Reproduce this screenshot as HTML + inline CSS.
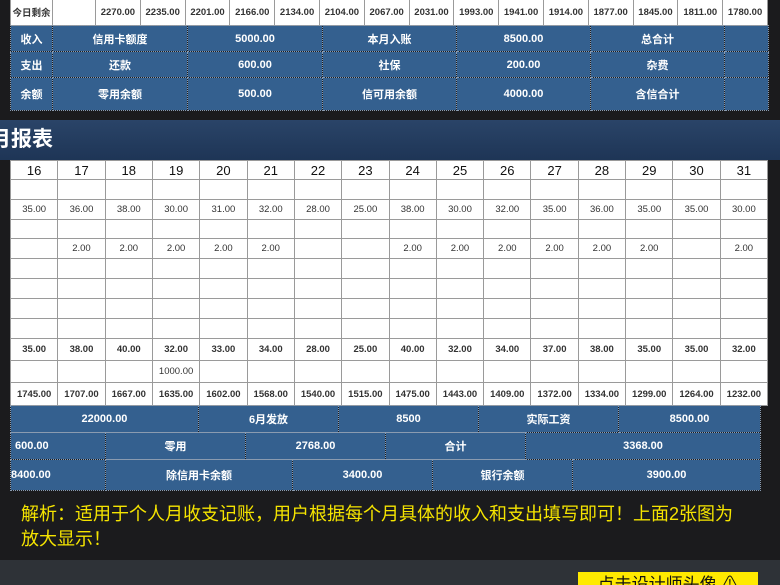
<!DOCTYPE html>
<html style="width:780px;height:585px;overflow:hidden"><head><meta charset="utf-8"><style>
*{margin:0;padding:0;box-sizing:border-box}
body{width:780px;height:585px;overflow:hidden;background:#1b1b1d;font-family:"Liberation Sans","Noto Sans CJK SC",sans-serif;position:relative}
table{border-collapse:collapse;position:absolute;table-layout:fixed}
td{text-align:center;overflow:hidden;white-space:nowrap}
.w td{background:#fff;border:1px solid #9a9a9a;font-size:9.5px;color:#333}
.r{color:#f00;font-weight:bold}
.b td{background:#34608f;border:1px dotted #8a9bb0;color:#fff;font-weight:bold;font-size:11px}
.h td{font-size:13px;color:#111}
</style></head><body>
<table class="w" style="left:10px;top:-2px;width:758px">
<colgroup><col style="width:42px"><col style="width:43px"><col span="15"></colgroup>
<tr style="height:27px"><td class="r">今日剩余</td><td></td>
<td class="r">2270.00</td><td class="r">2235.00</td><td class="r">2201.00</td><td class="r">2166.00</td><td class="r">2134.00</td><td class="r">2104.00</td><td class="r">2067.00</td><td class="r">2031.00</td><td class="r">1993.00</td><td class="r">1941.00</td><td class="r">1914.00</td><td class="r">1877.00</td><td class="r">1845.00</td><td class="r">1811.00</td><td class="r">1780.00</td></tr></table>
<table class="b" style="left:10px;top:25px;width:758px">
<colgroup><col style="width:42px"><col style="width:135px"><col style="width:135px"><col style="width:134px"><col style="width:134px"><col style="width:134px"><col style="width:44px"></colgroup>
<tr style="height:26px"><td>收入</td><td>信用卡额度</td><td>5000.00</td><td>本月入账</td><td>8500.00</td><td>总合计</td><td></td></tr>
<tr style="height:26px"><td>支出</td><td>还款</td><td>600.00</td><td>社保</td><td>200.00</td><td>杂费</td><td></td></tr>
<tr style="height:33px"><td>余额</td><td>零用余额</td><td>500.00</td><td>信可用余额</td><td>4000.00</td><td>含信合计</td><td></td></tr></table>
<div style="position:absolute;left:0;top:120px;width:780px;height:40px;background:linear-gradient(#2a4468,#1e3556);color:#fff;font-weight:bold;font-size:21px;line-height:40px;padding-left:0;text-indent:-10px">月报表</div>
<table class="w" style="left:10px;top:160px;width:758px">
<tr class="h" style="height:19px"><td>16</td><td>17</td><td>18</td><td>19</td><td>20</td><td>21</td><td>22</td><td>23</td><td>24</td><td>25</td><td>26</td><td>27</td><td>28</td><td>29</td><td>30</td><td>31</td></tr>
<tr style="height:20px"><td></td><td></td><td></td><td></td><td></td><td></td><td></td><td></td><td></td><td></td><td></td><td></td><td></td><td></td><td></td><td></td></tr>
<tr style="height:20px"><td>35.00</td><td>36.00</td><td>38.00</td><td>30.00</td><td>31.00</td><td>32.00</td><td>28.00</td><td>25.00</td><td>38.00</td><td>30.00</td><td>32.00</td><td>35.00</td><td>36.00</td><td>35.00</td><td>35.00</td><td>30.00</td></tr>
<tr style="height:19px"><td></td><td></td><td></td><td></td><td></td><td></td><td></td><td></td><td></td><td></td><td></td><td></td><td></td><td></td><td></td><td></td></tr>
<tr style="height:20px"><td></td><td>2.00</td><td>2.00</td><td>2.00</td><td>2.00</td><td>2.00</td><td></td><td></td><td>2.00</td><td>2.00</td><td>2.00</td><td>2.00</td><td>2.00</td><td>2.00</td><td></td><td>2.00</td></tr>
<tr style="height:20px"><td></td><td></td><td></td><td></td><td></td><td></td><td></td><td></td><td></td><td></td><td></td><td></td><td></td><td></td><td></td><td></td></tr>
<tr style="height:20px"><td></td><td></td><td></td><td></td><td></td><td></td><td></td><td></td><td></td><td></td><td></td><td></td><td></td><td></td><td></td><td></td></tr>
<tr style="height:20px"><td></td><td></td><td></td><td></td><td></td><td></td><td></td><td></td><td></td><td></td><td></td><td></td><td></td><td></td><td></td><td></td></tr>
<tr style="height:20px"><td></td><td></td><td></td><td></td><td></td><td></td><td></td><td></td><td></td><td></td><td></td><td></td><td></td><td></td><td></td><td></td></tr>
<tr style="height:22px"><td class="r">35.00</td><td class="r">38.00</td><td class="r">40.00</td><td class="r">32.00</td><td class="r">33.00</td><td class="r">34.00</td><td class="r">28.00</td><td class="r">25.00</td><td class="r">40.00</td><td class="r">32.00</td><td class="r">34.00</td><td class="r">37.00</td><td class="r">38.00</td><td class="r">35.00</td><td class="r">35.00</td><td class="r">32.00</td></tr>
<tr style="height:22px"><td></td><td></td><td></td><td>1000.00</td><td></td><td></td><td></td><td></td><td></td><td></td><td></td><td></td><td></td><td></td><td></td><td></td></tr>
<tr style="height:23px"><td class="r">1745.00</td><td class="r">1707.00</td><td class="r">1667.00</td><td class="r">1635.00</td><td class="r">1602.00</td><td class="r">1568.00</td><td class="r">1540.00</td><td class="r">1515.00</td><td class="r">1475.00</td><td class="r">1443.00</td><td class="r">1409.00</td><td class="r">1372.00</td><td class="r">1334.00</td><td class="r">1299.00</td><td class="r">1264.00</td><td class="r">1232.00</td></tr></table>
<table class="b" style="left:10px;top:405px;width:750px">
<colgroup><col style="width:188px"><col style="width:140px"><col style="width:140px"><col style="width:140px"><col style="width:142px"></colgroup>
<tr style="height:27px"><td>22000.00</td><td>6月发放</td><td>8500</td><td>实际工资</td><td>8500.00</td></tr></table>
<table class="b" style="left:10px;top:432px;width:750px">
<colgroup><col style="width:95px"><col style="width:140px"><col style="width:140px"><col style="width:140px"><col style="width:235px"></colgroup>
<tr style="height:27px"><td style="text-align:left;padding-left:4px">600.00</td><td>零用</td><td>2768.00</td><td>合计</td><td>3368.00</td></tr></table>
<table class="b" style="left:10px;top:459px;width:750px">
<colgroup><col style="width:95px"><col style="width:187px"><col style="width:140px"><col style="width:140px"><col style="width:188px"></colgroup>
<tr style="height:31px"><td style="text-align:left">8400.00</td><td>除信用卡余额</td><td>3400.00</td><td>银行余额</td><td>3900.00</td></tr></table>
<div style="position:absolute;left:21px;top:502px;width:730px;color:#f5e400;font-size:18px;line-height:25px;white-space:nowrap">解析：适用于个人月收支记账，用户根据每个月具体的收入和支出填写即可！上面2张图为<br>放大显示！</div>
<div style="position:absolute;left:0;top:560px;width:780px;height:25px;background:#2e3237;overflow:hidden">
<div style="position:absolute;left:578px;top:12px;width:180px;height:30px;background:#ffea00;color:#111;font-size:17px;text-align:center;line-height:26px">点击设计师头像 ⚠</div></div>
</body></html>
